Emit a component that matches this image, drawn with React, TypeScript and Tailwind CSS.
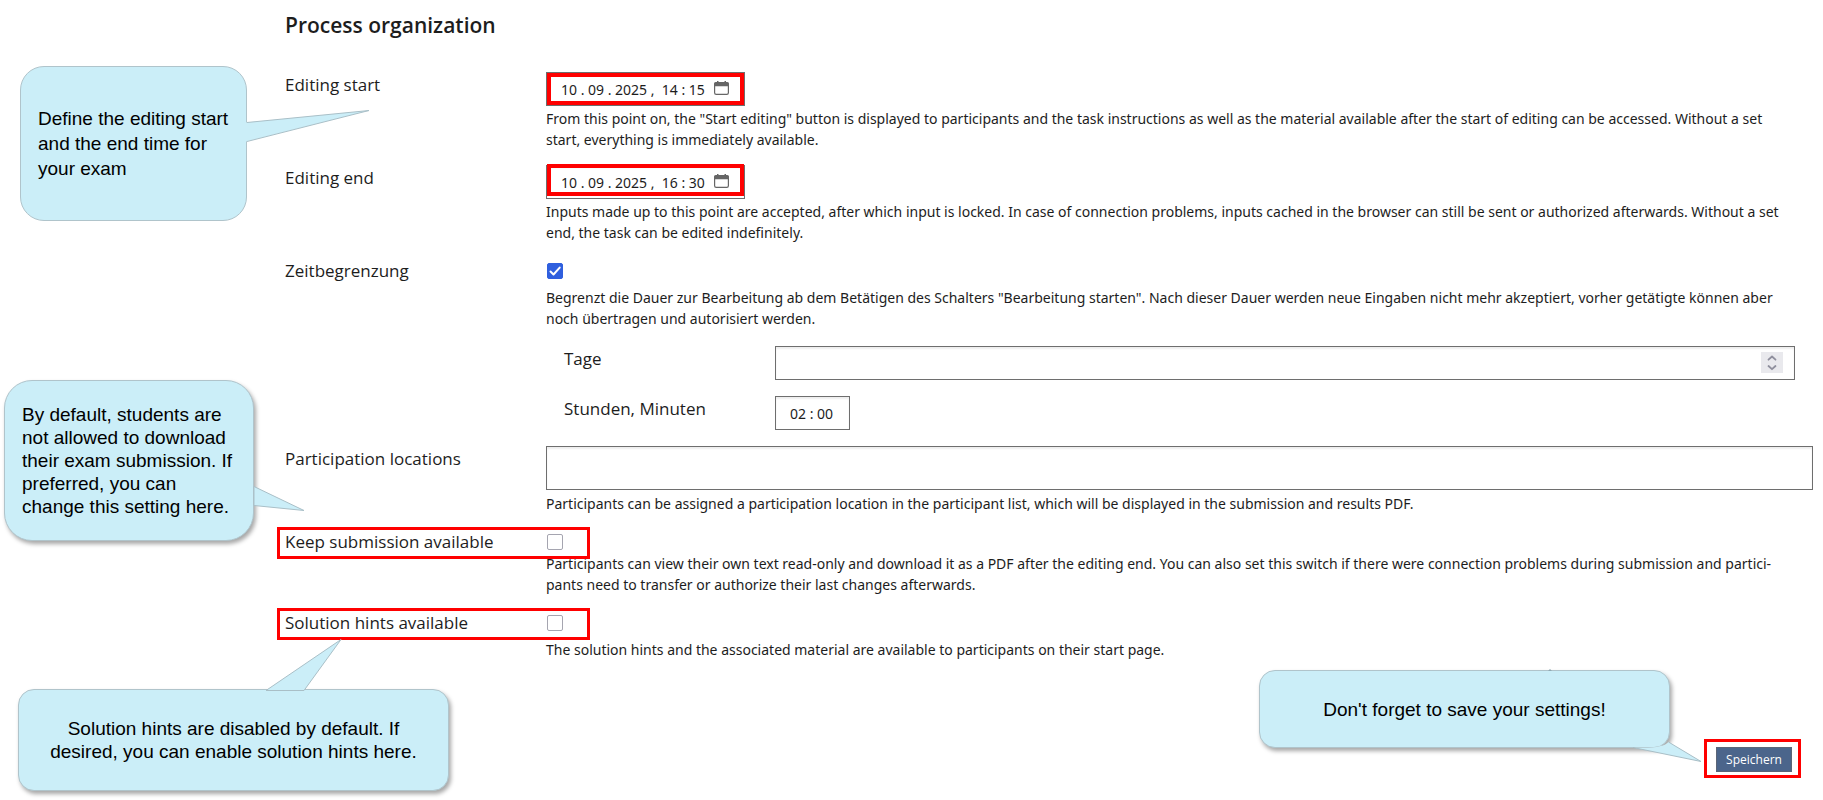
import { ReactNode } from "react"

interface RowProps {
    id: string
    label: string
    hint: string
    hintClass: string
    highlight?: boolean
    children: ReactNode
}

interface DateFieldProps {
    id: string
    value: string
    frame: string
}

interface CheckBoxProps {
    id: string
    checked?: boolean
}

interface CalloutProps {
    className: string
    children: ReactNode
}

const fieldClass = "block border border-[#6e6e6e] bg-white font-['Noto_Sans',sans-serif] text-sm text-[#1d1d1d] shadow-[inset_0_2px_2px_rgba(0,0,0,0.07)] outline-none"

const Row = ({ id, label, hint, hintClass, highlight, children }: RowProps) => (
    <div className="relative flex">
        {highlight && (
            <div className="pointer-events-none absolute -top-[2px] -left-2 h-8 w-[313px] border-3 border-[#ff0000]"></div>
        )}
        <label htmlFor={id} className="w-[261px] shrink-0 pt-px text-[17px] leading-6">{label}</label>
        <div className="min-w-0 flex-1">
            {children}
            <p id={`${id}-hint`} className={`${hintClass} pr-5 font-['Noto_Sans',sans-serif] text-sm leading-[21px]`}>{hint}</p>
        </div>
    </div>
)

const CalendarIcon = () => (
    <svg viewBox="0 0 15 14" className="h-[14px] w-[15px]" fill="none">
        <path d="M2 1h11a2 2 0 0 1 2 2v2.2H0V3a2 2 0 0 1 2-2Z" fill="#666" />
        <path d="M3 0h1.5v2H3zM10.5 0H12v2h-1.500z" fill="#666" />
        <rect x="0.6" y="1.9" width="13.8" height="11.5" rx="1.6" stroke="#666" strokeWidth="1.2" />
    </svg>
)

const DateField = ({ id, value, frame }: DateFieldProps) => (
    <div className="relative w-[199px]">
        <input id={id} type="text" defaultValue={value} aria-describedby={`${id}-hint`} className={`${fieldClass} h-[34px] w-full pr-8 pl-[14px]`} />
        <button type="button" aria-label={`Calendar ${id}`} className="absolute top-[9px] right-4">
            <CalendarIcon />
        </button>
        <div className={`${frame} pointer-events-none absolute inset-x-px h-8 border-4 border-[#ff0000]`}></div>
    </div>
)

const CheckBox = ({ id, checked }: CheckBoxProps) => (
    <div className="relative h-6 pt-[5px] pl-px">
        <input
            id={id}
            type="checkbox"
            defaultChecked={checked}
            aria-describedby={`${id}-hint`}
            className="peer block size-4 appearance-none rounded-xs border border-[#a5a5b0] bg-white checked:border-[#2f5fde] checked:bg-[#2f5fde]"
        />
        <svg viewBox="0 0 16 16" className="pointer-events-none absolute top-[5px] left-px hidden size-4 peer-checked:block" fill="none">
            <path d="M3.5 8.5 6.5 11.5 12.7 4.6" stroke="#fff" strokeWidth="2" strokeLinecap="round" strokeLinejoin="round" />
        </svg>
    </div>
)

const Callout = ({ className, children }: CalloutProps) => (
    <div className={`${className} absolute flex items-center border border-[#b0c4cb] bg-[#cbeef8] font-['Liberation_Sans',Arial,sans-serif] text-[19px] text-black`}>
        {children}
    </div>
)

export default function App() {
    return (
        <div className="relative bg-white font-['Open_Sans','Noto_Sans',sans-serif] text-[#1d1d1d]">
            <form className="pt-[11px] pb-[22px] pl-[285px]">
                <h2 className="text-[21px] leading-7 font-semibold">Process organization</h2>

                <div className="mt-[33px] flex flex-col gap-[15px] pr-[10px]">
                    <Row
                        id="start"
                        label="Editing start"
                        hint={'From this point on, the "Start editing" button is displayed to participants and the task instructions as well as the material available after the start of editing can be accessed. Without a set start, everything is immediately available.'}
                        hintClass="mt-[2px]"
                    >
                        <DateField id="start" value="10 . 09 . 2025 ,  14 : 15" frame="top-px" />
                    </Row>
                    <Row
                        id="end"
                        label="Editing end"
                        hint="Inputs made up to this point are accepted, after which input is locked. In case of connection problems, inputs cached in the browser can still be sent or authorized afterwards. Without a set end, the task can be edited indefinitely."
                        hintClass="mt-[2px]"
                    >
                        <DateField id="end" value="10 . 09 . 2025 ,  16 : 30" frame="-top-px" />
                    </Row>
                    <Row
                        id="limit"
                        label="Zeitbegrenzung"
                        hint={'Begrenzt die Dauer zur Bearbeitung ab dem Betätigen des Schalters "Bearbeitung starten". Nach dieser Dauer werden neue Eingaben nicht mehr akzeptiert, vorher getätigte können aber noch übertragen und autorisiert werden.'}
                        hintClass="mt-[5px]"
                    >
                        <CheckBox id="limit" checked />
                    </Row>

                    <div className="flex flex-col gap-4 pt-[2px] pr-[18px] pb-px pl-[279px]">
                        <div className="flex">
                            <label htmlFor="days" className="w-[211px] shrink-0 pt-px text-[17px] leading-6">Tage</label>
                            <div className="relative flex-1">
                                <input id="days" type="number" className={`${fieldClass} h-[34px] w-full px-[14px]`} />
                                <svg viewBox="0 0 22 21" className="pointer-events-none absolute top-[6px] right-3 h-[21px] w-[22px] bg-[#e9e9ed]" fill="none">
                                    <path d="M7.5 7.7 11 4.5l3.5 3.2M7.5 14 11 17.2l3.5-3.2" stroke="#8f8f9d" strokeWidth="1.8" strokeLinecap="round" strokeLinejoin="round" />
                                </svg>
                            </div>
                        </div>
                        <div className="flex">
                            <label htmlFor="time" className="w-[211px] shrink-0 pt-px text-[17px] leading-6">Stunden, Minuten</label>
                            <input id="time" type="text" defaultValue="02 : 00" className={`${fieldClass} h-[34px] w-[75px] pl-[14px]`} />
                        </div>
                    </div>

                    <Row
                        id="locations"
                        label="Participation locations"
                        hint="Participants can be assigned a participation location in the participant list, which will be displayed in the submission and results PDF."
                        hintClass="mt-[3px]"
                    >
                        <input id="locations" type="text" aria-describedby="locations-hint" className={`${fieldClass} h-11 w-full px-[14px]`} />
                    </Row>
                    <Row
                        id="keep"
                        label="Keep submission available"
                        hint={"Participants can view their own text read-only and download it as a PDF after the editing end. You can also set this switch if there were connection problems during submission and partici\u00adpants need to transfer or authorize their last changes afterwards."}
                        hintClass="mt-0"
                        highlight
                    >
                        <CheckBox id="keep" />
                    </Row>
                    <Row
                        id="hints"
                        label="Solution hints available"
                        hint="The solution hints and the associated material are available to participants on their start page."
                        hintClass="mt-[5px]"
                        highlight
                    >
                        <CheckBox id="hints" />
                    </Row>
                </div>

                <div className="mt-[79px] flex justify-end pr-[22px]">
                    <div className="border-3 border-[#ff0000] pt-[5px] pr-[6px] pb-[3px] pl-[9px]">
                        <button type="button" className="block h-[25px] w-[76px] border border-[#5b6577] bg-[#4b658b] text-xs text-white">Speichern</button>
                    </div>
                </div>
            </form>

            <Callout className="top-[66px] left-[20px] h-[155px] w-[227px] rounded-3xl pl-[17px] leading-[25px]">
                <p>Define the editing start and the end time for your exam</p>
                <svg viewBox="0 0 124 32" className="absolute top-[43px] left-[225px] h-8 w-[124px]">
                    <path d="M0 12.5 123 .5 0 31.5Z" fill="#cbeef8" />
                    <path d="M1 12.5 123 .5 1 31.5" fill="none" stroke="#a9bfc7" />
                </svg>
            </Callout>

            <Callout className="top-[380px] left-[4px] h-[161px] w-[250px] rounded-[28px] px-[17px] leading-[23px] shadow-[2px_3px_4px_rgba(0,0,0,0.35)]">
                <p>By default, students are not allowed to download their exam submission. If preferred, you can change this setting here.</p>
                <svg viewBox="0 0 52 26" className="absolute top-[105px] left-[248px] h-[26px] w-[52px]">
                    <path d="M1 .5 51 24.5 1 19.5Z" fill="#cbeef8" stroke="#a9bfc7" />
                </svg>
            </Callout>

            <Callout className="top-[689px] left-[18px] h-[102px] w-[431px] justify-center rounded-2xl px-6 text-center leading-[23px] shadow-[2px_3px_4px_rgba(0,0,0,0.35)]">
                <p>Solution hints are disabled by default. If desired, you can enable solution hints here.</p>
                <svg viewBox="0 0 78 52" className="absolute -top-[51px] left-[246px] h-[52px] w-[78px]">
                    <path d="M1 51.5 76 .5 39 51.5Z" fill="#cbeef8" stroke="#a9bfc7" />
                </svg>
            </Callout>

            <Callout className="top-[670px] right-[153px] h-[78px] w-[411px] justify-center rounded-2xl leading-[23px] shadow-[2px_3px_4px_rgba(0,0,0,0.35)]">
                <p>Don't forget to save your settings!</p>
                <svg viewBox="0 0 70 22" className="absolute top-[70px] left-[372px] h-[22px] w-[70px]">
                    <path d="M1 6.5Q31 8 36.5 1L69 20.5Z" fill="#cbeef8" />
                    <path d="M1 6.5 69 20.5 36.5 1" fill="none" stroke="#a9bfc7" />
                </svg>
                <svg viewBox="0 0 4 2" className="absolute -top-[2px] left-[288px] h-[2px] w-1">
                    <path d="M0 2 2 0l2 2Z" fill="#8fa9b3" />
                </svg>
            </Callout>
        </div>
    )
}
